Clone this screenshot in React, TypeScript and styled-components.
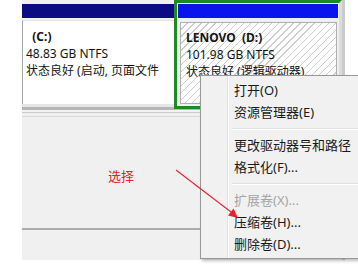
import React from 'react';
import styled, { createGlobalStyle } from 'styled-components';

const GlobalStyle = createGlobalStyle`
  html, body {
    margin: 0;
    padding: 0;
    background: #fff;
    overflow: hidden;
  }
  body {
    width: 358px;
    height: 267px;
    font-family: "Noto Sans", "Noto Sans CJK SC", sans-serif;
  }
`;

type MenuEntry = { label?: string; disabled?: boolean; separator?: boolean };

const menuEntries: MenuEntry[] = [
  { label: '打开(O)' },
  { label: '资源管理器(E)' },
  { separator: true },
  { label: '更改驱动器号和路径' },
  { label: '格式化(F)...' },
  { separator: true },
  { label: '扩展卷(X)...', disabled: true },
  { label: '压缩卷(H)...' },
  { label: '删除卷(D)...' },
];

const App = () => {
  return (
    <>
      <GlobalStyle />
      <Page>
        <Panel>
          <DiskRow>
            <CVolume>
              <VolumeBar $color="#0b0b82" />
              <CBody>
                <VolumeText>
                  <Name>{'  (C:)'}</Name>
                  <Line>48.83 GB NTFS</Line>
                  <Line>状态良好 (启动, 页面文件</Line>
                </VolumeText>
              </CBody>
            </CVolume>
            <DVolume>
              <VolumeBar $color="#0a14ec" />
              <Hatch>
                <VolumeText>
                  <Name>{'LENOVO  (D:)'}</Name>
                  <Line>101.98 GB NTFS</Line>
                  <Line>状态良好 (逻辑驱动器)</Line>
                </VolumeText>
              </Hatch>
            </DVolume>
          </DiskRow>
          <RowEdge />
          <Workspace>
            <Annotation>选择</Annotation>
          </Workspace>
          <Footer />

          <Menu>
            {menuEntries.map((entry, i) =>
              entry.separator ? (
                <Separator key={`sep-${i}`} />
              ) : (
                <MenuItem key={entry.label} $disabled={entry.disabled}>
                  {entry.label}
                </MenuItem>
              ),
            )}
          </Menu>
        </Panel>

        <Arrow width="358" height="267" viewBox="0 0 358 267">
          <line x1="176" y1="170" x2="231" y2="212" stroke="#e3242b" strokeWidth="1.1" />
          <polygon points="238,218 228,215.5 233.5,208.5" fill="#e3242b" />
        </Arrow>
      </Page>
    </>
  );
};

export default App;

const Page = styled.div`
  position: relative;
  width: 358px;
  height: 267px;
  overflow: hidden;
`;

const Panel = styled.div`
  position: relative;
  margin-left: 22px;
  width: 323px;
  height: 260px;
  box-sizing: border-box;
  background: #f0f0f0;
  border-right: 3px solid #cbcbcb;
`;

const DiskRow = styled.div`
  display: flex;
  align-items: flex-start;
  height: 104px;
`;

const CVolume = styled.div`
  width: 152px;
  padding-top: 4px;
  display: flex;
  flex-direction: column;
`;

const VolumeBar = styled.div<{ $color: string }>`
  height: 14px;
  background: ${(p) => p.$color};
`;

const CBody = styled.div`
  margin-top: 2px;
  height: 84px;
  box-sizing: border-box;
  background: #fff;
  border-left: 1px solid #a8a8a8;
  border-top: 1px solid #e2e2e2;
  padding: 7px 0 0 3px;
`;

const DVolume = styled.div`
  position: relative;
  z-index: 1;
  width: 168px;
  box-sizing: border-box;
  border: 3px solid #1f8a24;
  border-right: 3px solid #dcdcdc;
  padding: 1px 1px 2px 1px;
  background: #f0f0f0;
`;

const Hatch = styled.div`
  margin: 4px 1px 0 2px;
  height: 82px;
  box-sizing: border-box;
  border: 1px solid #b0b0b0;
  padding: 6px 0 0 5px;
  background: repeating-linear-gradient(135deg, #ffffff 0 4px, #cdcdcd 4px 5px);
`;

const VolumeText = styled.div`
  font-size: 12px;
  line-height: 17px;
  color: #141414;
  white-space: pre;
`;

const Name = styled.div`
  font-weight: bold;
`;

const Line = styled.div``;

const RowEdge = styled.div`
  height: 14px;
  background: linear-gradient(
    to bottom,
    #e6e6e6 0 3px,
    #b6b6b6 3px 6px,
    #f2f2f2 6px 8px,
    #cacaca 8px 9px,
    #f0f0f0 9px 12px,
    #dadada 12px 13px,
    #f0f0f0 13px
  );
`;

const Workspace = styled.div`
  height: 112px;
  box-sizing: border-box;
  padding: 49px 0 0 86px;
  border-bottom: 2px solid #acacac;
`;

const Annotation = styled.div`
  font-family: "Noto Sans CJK SC", sans-serif;
  font-size: 13px;
  line-height: 18px;
  color: #e3242b;
`;

const Footer = styled.div`
  height: 28px;
`;

const Menu = styled.div`
  position: absolute;
  z-index: 2;
  left: 178px;
  top: 75px;
  width: 170px;
  box-sizing: border-box;
  padding: 3px 2px 3px 3px;
  background: #f1f1f1;
  border: 1px solid #979797;
  box-shadow: 2px 2px 3px rgba(0, 0, 0, 0.25);
  background-image: linear-gradient(
    to right,
    transparent 0 26px,
    #e2e3e3 26px 27px,
    #ffffff 27px 28px,
    transparent 28px
  );
`;

const MenuItem = styled.div<{ $disabled?: boolean }>`
  height: 22px;
  line-height: 22px;
  padding-left: 30px;
  font-family: "Noto Sans", "Noto Sans CJK SC", sans-serif;
  font-size: 13px;
  white-space: nowrap;
  color: ${(p) => (p.$disabled ? '#a5a5a5' : '#1a1a1a')};
`;

const Separator = styled.div`
  height: 11px;
  margin-left: 28px;
  background: linear-gradient(
    to bottom,
    transparent 0 5px,
    #e0e0e0 5px 6px,
    #ffffff 6px 7px,
    transparent 7px
  );
`;

const Arrow = styled.svg`
  position: absolute;
  z-index: 3;
  left: 0;
  top: 0;
  pointer-events: none;
`;
